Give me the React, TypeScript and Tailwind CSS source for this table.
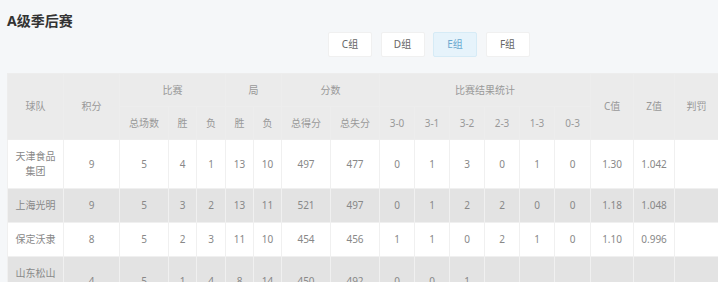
import React from "react";

const cols = [56, 56, 49, 28, 29, 28, 28, 49, 49, 35, 35, 35, 35, 35, 36, 43, 41, 44];

const rows: string[][] = [
  ["天津食品集团", "9", "5", "4", "1", "13", "10", "497", "477", "0", "1", "3", "0", "1", "0", "1.30", "1.042", ""],
  ["上海光明", "9", "5", "3", "2", "13", "11", "521", "497", "0", "1", "2", "2", "0", "0", "1.18", "1.048", ""],
  ["保定沃隶", "8", "5", "2", "3", "11", "10", "454", "456", "1", "1", "0", "2", "1", "0", "1.10", "0.996", ""],
  ["山东松山男篮", "4", "5", "1", "4", "8", "14", "450", "492", "0", "0", "1", "", "", "", "", "", ""],
];

export default function App() {
  const groups = ["C组", "D组", "E组", "F组"];
  return (
    <div className="w-[718px] h-[282px] overflow-hidden bg-[#f5f7f9] font-['Noto_Sans','Noto_Sans_CJK_SC',sans-serif]">
      <div className="pl-[7px] pt-[11px] text-[14px] leading-[20px] font-bold text-[#333]">A级季后赛</div>
      <div className="flex gap-[8.5px] pl-[328px] mt-[1px]">
        {groups.map((g) => (
          <div
            key={g}
            className={
              g === "E组"
                ? "w-[44px] h-[25px] flex items-center justify-center rounded-[2px] border border-[#d6ebf6] bg-[#e6f3fb] text-[10px] text-[#6aa9d0]"
                : "w-[44px] h-[25px] flex items-center justify-center rounded-[2px] border border-[#f0f0f0] bg-white text-[10px] text-[#666]"
            }
          >
            {g}
          </div>
        ))}
      </div>
      <table className="ml-[7px] mt-[16px] w-[711px] table-fixed border-collapse text-[10px] leading-[15px] text-center">
        <colgroup>
          {cols.map((w, i) => (
            <col key={i} style={{ width: w }} />
          ))}
        </colgroup>
        <thead className="bg-[#ebebeb] text-[#999]">
          <tr className="h-[33px]">
            <th rowSpan={2} className="font-normal border border-[#ededed]">球队</th>
            <th rowSpan={2} className="font-normal border border-[#ededed]">积分</th>
            <th colSpan={3} className="font-normal border border-[#ededed]">比赛</th>
            <th colSpan={2} className="font-normal border border-[#ededed]">局</th>
            <th colSpan={2} className="font-normal border border-[#ededed]">分数</th>
            <th colSpan={6} className="font-normal border border-[#ededed]">比赛结果统计</th>
            <th rowSpan={2} className="font-normal border border-[#ededed]">C值</th>
            <th rowSpan={2} className="font-normal border border-[#ededed]">Z值</th>
            <th rowSpan={2} className="font-normal border border-[#ededed]">判罚</th>
          </tr>
          <tr className="h-[33px]">
            {["总场数", "胜", "负", "胜", "负", "总得分", "总失分", "3-0", "3-1", "3-2", "2-3", "1-3", "0-3"].map((h, i) => (
              <th key={i} className="font-normal border border-[#ededed]">{h}</th>
            ))}
          </tr>
        </thead>
        <tbody className="text-[#888]">
          {rows.map((r, ri) => (
            <tr key={ri} className={ri % 2 === 1 ? "bg-[#e3e3e3]" : "bg-white"}>
              {r.map((c, ci) => (
                <td key={ci} className={ci === 0 ? "py-[9px] px-[6px] border border-[#f0f0f0]" : "py-[9px] border border-[#f0f0f0]"}>
                  {c}
                </td>
              ))}
            </tr>
          ))}
        </tbody>
      </table>
    </div>
  );
}
